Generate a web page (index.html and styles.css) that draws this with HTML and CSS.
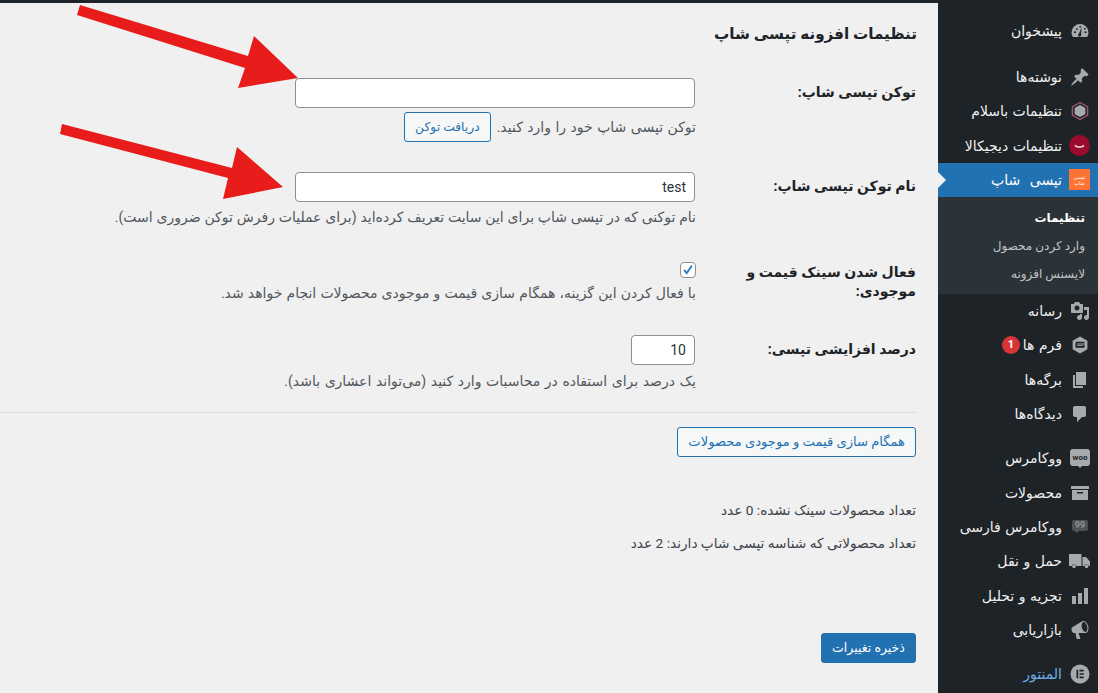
FILE: index.html
```html
<!DOCTYPE html>
<html lang="fa" dir="rtl">
<head>
<meta charset="utf-8">
<title>تنظیمات افزونه تپسی شاپ</title>
<link rel="stylesheet" href="styles.css">
</head>
<body>
<div class="layout">
<nav class="sidebar">
  <ul class="menu first">
    <li class="item"><svg class="icon" viewBox="0 0 20 20"><path d="M10 3a8.500 8.500 0 0 0-8.500 8.500c0 1.900.6 3.500 1.600 4.500h13.800c1-1 1.600-2.600 1.600-4.500A8.500 8.500 0 0 0 10 3z"/><path class="cut" d="M11.800 6l-2.800 6.500a1.600 1.600 0 1 0 2 .5zM4 10.500h2v1.500H4zM6 7.500h1.600v1.600H6zM9.500 5h1.500v1.500H9.500zM14 7h1.600v1.600H14zM14.500 10.500h2V12h-2z"/></svg><span>پیشخوان</span></li>
  </ul>
  <ul class="menu group">
    <li class="item"><svg class="icon" viewBox="0 0 20 20"><path d="M10.440 3.020l1.820-1.820 6.360 6.350-1.830 1.820c-1.050-.68-2.480-.57-3.410.36l-.75.75c-.92.93-1.040 2.350-.35 3.410l-1.830 1.820-2.410-2.410-2.800 2.790c-.42.42-3.380 2.710-3.800 2.290s1.860-3.390 2.280-3.810l2.790-2.790L4.100 9.360l1.830-1.820c1.050.69 2.480.57 3.400-.36l.75-.75c.93-.92 1.050-2.350.36-3.410z"/></svg><span>نوشته‌ها</span></li>
    <li class="item"><svg class="icon" viewBox="0 0 20 20"><path class="hex" d="M10 1.500l7.600 4.300v8.400L10 18.500l-7.600-4.300V5.800z"/><path d="M10 4l5.400 3v6L10 16l-5.400-3V7z"/></svg><span>تنظیمات باسلام</span></li>
    <li class="item"><svg class="icon big" viewBox="0 0 21 21"><circle class="dk" cx="10.500" cy="10.500" r="10.500"/><path class="smile" d="M6.500 10.800c1.200 1.800 6.800 1.800 8 0"/></svg><span>تنظیمات دیجیکالا</span></li>
    <li class="item active"><span class="tapsi"><span>تپسی</span><span>شاپ</span></span><span class="tapsi-name">تپسی شاپ</span></li>
  </ul>
  <ul class="submenu">
    <li class="sub current">تنظیمات</li>
    <li class="sub">وارد کردن محصول</li>
    <li class="sub">لایسنس افزونه</li>
  </ul>
  <ul class="menu">
    <li class="item"><svg class="icon" viewBox="0 0 20 20"><path d="M13 11V4c0-.55-.45-1-1-1h-1.670L9 1H5L3.670 3H2c-.55 0-1 .45-1 1v7c0 .55.45 1 1 1h10c.55 0 1-.45 1-1zM7 4.500c1.380 0 2.500 1.120 2.500 2.500S8.380 9.500 7 9.500 4.500 8.380 4.500 7 5.620 4.500 7 4.500zM14 6h5v10.500c0 1.380-1.120 2.500-2.500 2.500S14 17.880 14 16.500s1.120-2.500 2.500-2.500c.17 0 .34.02.5.05V9h-3V6zm-4 8.050V13h2v3.500c0 1.380-1.120 2.500-2.500 2.500S7 17.880 7 16.500 8.120 14 9.500 14c.17 0 .34.02.5.05z"/></svg><span>رسانه</span></li>
    <li class="item"><svg class="icon" viewBox="0 0 20 20"><path d="M10 1.500l7.400 4.200v8.600L10 18.500l-7.400-4.200V5.700z"/><path class="cut" d="M5.500 8.300c0-.9.7-1.500 1.500-1.500h7.500v1.600H7.500c-.3 0-.4.200-.4.400v.6h7.400v3.300h-9zm1.600 2v.8h5.800v-.8z"/></svg><span>فرم ها</span><b class="badge">1</b></li>
    <li class="item"><svg class="icon" viewBox="0 0 20 20"><path d="M6 15V2h10v13H6zm-1 1h8v2H3V5h2v11z"/></svg><span>برگه‌ها</span></li>
    <li class="item"><svg class="icon" viewBox="0 0 20 20"><path d="M5 2h9c1.100 0 2 .9 2 2v7c0 1.100-.9 2-2 2h-2l-5 5v-5H5c-1.100 0-2-.9-2-2V4c0-1.100.9-2 2-2z"/></svg><span>دیدگاه‌ها</span></li>
  </ul>
  <ul class="menu group">
    <li class="item"><span class="woo">woo</span><span>ووکامرس</span></li>
    <li class="item"><svg class="icon" viewBox="0 0 20 20"><path d="M1 3h18v3H1zM2 7h16v10H2z"/><path class="cut" d="M7 9h6v1.500H7z"/></svg><span>محصولات</span></li>
    <li class="item"><span class="bubble">99</span><span>ووکامرس فارسی</span></li>
    <li class="item"><svg class="icon wide" viewBox="0 0 21 20"><path d="M0 3h12.500v12H7.300a2.600 2.600 0 0 0-4.600 0H0zM13.500 6h3.500l4 4.500V15h-1.200a2.600 2.600 0 0 0-4.600 0h-1.700z"/><circle cx="5" cy="15.500" r="1.800"/><circle cx="17.500" cy="15.500" r="1.800"/></svg><span>حمل و نقل</span></li>
    <li class="item"><svg class="icon" viewBox="0 0 20 20"><path d="M18 18V2h-4v16h4zm-6 0V7H8v11h4zm-6 0v-8H2v8h4z"/></svg><span>تجزیه و تحلیل</span></li>
    <li class="item"><svg class="icon" viewBox="0 0 20 20"><path d="M18.150 5.940c.46 1.620.38 3.220-.02 4.480-.42 1.280-1.260 2.180-2.300 2.480-.16.06-.26.06-.4.06-.06.02-.12.02-.18.02-.06.02-.14.02-.22.02H8.500l1.800 5.500c.02.14-.06.26-.14.34-.08.1-.24.16-.34.16H6.950c-.1 0-.26-.06-.34-.16-.08-.08-.16-.2-.14-.34l-1-5.500H4.250c-.5.06-1.080-.18-1.540-.62s-.88-1.080-1.060-1.880c-.24-.8-.2-1.560-.02-2.200.18-.62.58-1.080 1.060-1.300l9-5.400c.1-.06.18-.1.24-.16.06-.04.14-.08.24-.12.16-.08.28-.12.5-.18 1.040-.3 2.240.1 3.220 1 .98.880 1.840 2.240 2.260 3.860zm-2.580 5.980c.4-.1.74-.34 1.040-.7.58-.7.86-1.760.86-3.040-.02-.64-.1-1.300-.28-1.980-.34-1.360-1.020-2.500-1.780-3.240-.38-.38-.76-.64-1.140-.78-.18-.06-.36-.08-.52-.1-.12 0-.22.02-.32.04-.38.1-.7.34-1 .7-.56.7-.86 1.760-.86 3.040 0 .64.1 1.300.28 1.980.34 1.340 1.020 2.480 1.780 3.240.4.38.78.64 1.160.78.32.14.56.14.8.06z"/></svg><span>بازاریابی</span></li>
  </ul>
  <ul class="menu group">
    <li class="item link"><svg class="icon" viewBox="0 0 20 20"><circle cx="10" cy="10" r="9.500"/><path class="cut" d="M6.500 5.800h1.700v8.400H6.500zM9.500 5.800h4.200v1.700H9.500zM9.500 9.150h4.200v1.700H9.500zM9.500 12.500h4.200v1.700H9.500z"/></svg><span>المنتور</span></li>
  </ul>
</nav>
<main class="main">
  <div class="topbar"></div>
  <div class="wrap">
    <h1 class="title">تنظیمات افزونه تپسی شاپ</h1>
    <div class="field token">
      <label class="label">توکن تپسی شاپ:</label>
      <div class="control">
        <input class="input" type="text">
        <p class="desc with-btn"><span class="spaced-a">توکن تپسی شاپ خود را وارد کنید.</span><a class="btn small">دریافت توکن</a></p>
      </div>
    </div>
    <div class="field name">
      <label class="label">نام توکن تپسی شاپ:</label>
      <div class="control">
        <input class="input" type="text" value="test">
        <p class="desc spaced-b">نام توکنی که در تپسی شاپ برای این سایت تعریف کرده‌اید (برای عملیات رفرش توکن ضروری است).</p>
      </div>
    </div>
    <div class="field sync">
      <label class="label">فعال شدن سینک قیمت و موجودی:</label>
      <div class="control">
        <span class="check"><svg viewBox="0 0 16 16"><path d="M3.500 8l3 3.500 6-8.500" /></svg></span>
        <p class="desc flat spaced-c">با فعال کردن این گزینه، همگام سازی قیمت و موجودی محصولات انجام خواهد شد.</p>
      </div>
    </div>
    <div class="field percent">
      <label class="label">درصد افزایشی تپسی:</label>
      <div class="control">
        <input class="input num" type="text" value="10">
        <p class="desc lower spaced-d">یک درصد برای استفاده در محاسبات وارد کنید (می‌تواند اعشاری باشد).</p>
      </div>
    </div>
    <hr class="rule">
    <a class="btn wide-btn">همگام سازی قیمت و موجودی محصولات</a>
    <p class="stat first-stat">تعداد محصولات سینک نشده: 0 عدد</p>
    <p class="stat">تعداد محصولاتی که شناسه تپسی شاپ دارند: 2 عدد</p>
    <a class="btn primary">ذخیره تغییرات</a>
  </div>
  <svg class="arrows" viewBox="0 0 320 210">
    <path d="M80 5L248 56L254 36L298 78L238 88L245 68L77 15z"/>
    <path d="M62 124L232 168L237 147L283 187L223 199L228 178L60 134z"/>
  </svg>
</main>
</div>
</body>
</html>
```
FILE: styles.css
```css
* { box-sizing: border-box; }
html, body { margin: 0; height: 100%; overflow: hidden; }
body {
  background: #f0f0f1;
  color: #3c434a;
  font-family: Roboto, "DejaVu Sans", sans-serif;
  font-size: 13px;
}
.layout { display: flex; height: 693px; }
.sidebar {
  flex: 0 0 160px;
  background: #1d2327;
  color: #f0f0f1;
  padding-top: 14px;
  overflow: hidden;
}
.menu, .submenu { list-style: none; margin: 0; padding: 0; }
.group { margin-top: 10px; }
.first + .group { margin-top: 11.500px; }
.item {
  display: flex;
  align-items: center;
  gap: 8px;
  height: 34.300px;
  padding-right: 8px;
  font-size: 14px;
  word-spacing: 1px;
  position: relative;
  white-space: nowrap;
}
.tapsi-name { word-spacing: 6px; }
.icon { flex: 0 0 20px; width: 20px; height: 20px; fill: #a7aaad; }
.icon.big { flex-basis: 21px; width: 21px; height: 21px; margin-left: -1px; }
.icon.wide { flex-basis: 21px; width: 21px; margin-left: -1px; }
.cut { fill: #1d2327; }
.hex { fill: #1d2327; stroke: #a0596b; stroke-width: 1.400; }
.dk { fill: #9a0b2c; }
.smile { fill: none; stroke: #e8c9cf; stroke-width: 1.800; stroke-linecap: round; }
.active { background: #2271b1; color: #fff; }
.active::after {
  content: "";
  position: absolute;
  left: 0;
  top: 50%;
  margin-top: -8px;
  border: 8px solid transparent;
  border-left-color: #f0f0f1;
  border-right-width: 0;
}
.tapsi {
  flex: 0 0 21px;
  width: 21px;
  height: 21px;
  margin-left: -1px;
  background: #ff7235;
  color: #fff;
  font-size: 5px;
  line-height: 6px;
  display: flex;
  flex-direction: column;
  align-items: center;
  justify-content: center;
}
.submenu { background: #2c3338; height: 97px; padding-top: 7px; }
.sub {
  height: 28px;
  line-height: 28px;
  padding-right: 13px;
  font-size: 12px;
  color: #c3c4c7;
}
.sub.current { color: #fff; font-weight: 700; }
.badge {
  width: 18px;
  height: 18px;
  border-radius: 50%;
  background: #d63638;
  color: #fff;
  font: 700 11px/18px Roboto, sans-serif;
  text-align: center;
  margin-right: -5px;
}
.woo {
  flex: 0 0 20px;
  height: 17px;
  margin-top: -2px;
  border-radius: 3px;
  background: #a7aaad;
  color: #1d2327;
  font: 700 8px/17px Roboto, sans-serif;
  text-align: center;
  position: relative;
}
.woo::after {
  content: "";
  position: absolute;
  left: 8px;
  top: 17px;
  border: 2px solid transparent;
  border-top-color: #a7aaad;
}
.bubble {
  flex: 0 0 16px;
  height: 11px;
  margin: -2px 2px 0;
  border-radius: 2px;
  background: #4d5257;
  color: #8f9296;
  font: 700 9px/11px Roboto, sans-serif;
  text-align: center;
  position: relative;
}
.bubble::after {
  content: "";
  position: absolute;
  left: 3px;
  top: 11px;
  border: 2px solid transparent;
  border-top-color: #4d5257;
}
.link { color: #72aee6; }
.main { flex: 1; position: relative; min-width: 0; }
.topbar { height: 3px; background: #1d2327; }
.wrap { padding: 0 22px 0 0; }
.title {
  margin: 0 -1px 0 0;
  padding-top: 19px;
  height: 75px;
  font-size: 15.200px;
  line-height: 24px;
  font-weight: 700;
  color: #1d2327;
}
.field { display: grid; grid-template-columns: 221px 1fr; }
.label {
  font-size: 14px;
  font-weight: 700;
  line-height: 19px;
  color: #1d2327;
}
.control { min-width: 0; }
.token .label, .name .label, .percent .label { padding-top: 5px; }
.name { margin-top: 30px; }
.sync { margin-top: 34px; }
.sync .label { padding: 1px 0 0 30px; }
.percent { margin-top: 32px; }
.input {
  display: block;
  width: 400px;
  height: 30px;
  padding: 0 8px;
  background: #fff;
  border: 1px solid #8c8f94;
  border-radius: 4px;
  font: 14px Roboto, sans-serif;
  color: #2c3338;
  outline: 0;
}
.input.num { width: 64px; }
.desc {
  margin: 4px -1px 0 0;
  font-size: 14px;
  line-height: 22px;
  color: #50575e;
  white-space: nowrap;
}
.desc.with-btn { display: flex; align-items: center; gap: 6px; }
.desc.flat { margin-top: 5px; line-height: 20px; }
.desc.lower { margin-top: 5px; }
.spaced-a { word-spacing: 1px; }
.spaced-b { word-spacing: .33px; }
.spaced-c { word-spacing: .67px; }
.spaced-d { word-spacing: 1.100px; }
.btn {
  display: inline-block;
  height: 30px;
  line-height: 28px;
  padding: 0 10px;
  font-size: 13px;
  background: #f6f7f7;
  color: #2271b1;
  border: 1px solid #2271b1;
  border-radius: 3px;
  white-space: nowrap;
}
.btn.small { font-size: 12.300px; }
.btn.wide-btn { font-size: 13.100px; }
.btn.primary { display: block; width: 95px; margin-top: 67px; background: #2271b1; color: #fff; text-align: center; padding: 0; font-size: 12.500px; }
.check {
  display: block;
  width: 16px;
  height: 16px;
  margin-right: -1px;
  background: #fff;
  border: 1px solid #8c8f94;
  border-radius: 4px;
}
.check svg { display: block; width: 14px; height: 14px; fill: none; stroke: #3582c4; stroke-width: 2.200; }
.rule { margin: 20px 0 14px; border: 0; border-top: 1px solid #dcdcde; }
.stat { margin: 0; height: 33px; line-height: 20px; font-size: 13.700px; color: #3c434a; white-space: nowrap; }
.first-stat { margin-top: 43px; }
.arrows {
  position: absolute;
  left: 0;
  top: 0;
  width: 320px;
  height: 210px;
  fill: #e91c1c;
  pointer-events: none;
}
```
